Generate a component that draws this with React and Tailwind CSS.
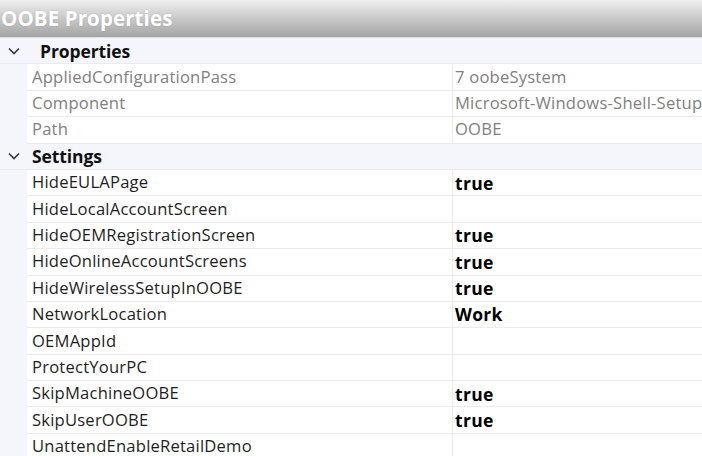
const groups = [
  {
    title: "Properties",
    indent: true,
    rows: [
      { name: "AppliedConfigurationPass", value: "7 oobeSystem", readOnly: true },
      { name: "Component", value: "Microsoft-Windows-Shell-Setup", readOnly: true },
      { name: "Path", value: "OOBE", readOnly: true },
    ],
  },
  {
    title: "Settings",
    rows: [
      { name: "HideEULAPage", value: "true" },
      { name: "HideLocalAccountScreen", value: "" },
      { name: "HideOEMRegistrationScreen", value: "true" },
      { name: "HideOnlineAccountScreens", value: "true" },
      { name: "HideWirelessSetupInOOBE", value: "true" },
      { name: "NetworkLocation", value: "Work" },
      { name: "OEMAppId", value: "" },
      { name: "ProtectYourPC", value: "" },
      { name: "SkipMachineOOBE", value: "true" },
      { name: "SkipUserOOBE", value: "true" },
      { name: "UnattendEnableRetailDemo", value: "" },
    ],
  },
];

function Chevron() {
  return (
    <svg width="14" height="10" viewBox="0 0 14 10" className="shrink-0">
      <path d="M2 2.5 L7 7.5 L12 2.5" fill="none" stroke="#3a3a3a" strokeWidth="1.7" />
    </svg>
  );
}

function GroupHeader({ title, indent }) {
  return (
    <div className="flex h-[26.4px] items-center bg-[#f4f6fc] border-b border-[#e9ebf0]">
      <div className="w-[27px] flex justify-center">
        <Chevron />
      </div>
      <span className={`${indent ? "pl-[13px]" : "pl-[5px]"} text-[17.5px] font-bold text-[#111] tracking-[-0.1px]`}>{title}</span>
    </div>
  );
}

function Row({ name, value, readOnly }) {
  const color = readOnly ? "text-[#808080]" : "text-[#1e1e1e]";
  return (
    <div className="flex h-[26.4px]">
      <div className="w-[27px] bg-[#f4f6fc]" />
      <div className={`w-[426px] flex items-center pl-[5px] bg-white border-b border-[#ececee] border-r border-r-[#ececee] text-[16.6px] tracking-[0.2px] ${color}`}>
        {name}
      </div>
      <div className={`flex-1 flex items-center pl-[2px] bg-white border-b border-[#ececee] whitespace-nowrap overflow-hidden ${readOnly ? "text-[16.6px] tracking-[0.2px] " + color : "text-[17.5px] font-bold tracking-[0.3px] text-black"}`}>
        {value}
      </div>
    </div>
  );
}

export default function App() {
  return (
    <div className="w-[702px] h-[456px] overflow-hidden bg-[#f4f6fc] font-['Open_Sans',Arial,sans-serif]">
      <div className="h-[38px] bg-gradient-to-b from-[#efefef] to-[#a4a4a4] border-b border-[#dfe0e6] flex items-center pl-[1px]">
        <span className="text-white font-bold text-[20.5px] tracking-[0.1px] [text-shadow:0_0_2px_rgba(0,0,0,0.15)]">
          OOBE Properties
        </span>
      </div>
      {groups.map(g => (
        <div key={g.title}>
          <GroupHeader title={g.title} indent={g.indent} />
          {g.rows.map(r => (
            <Row key={r.name} {...r} />
          ))}
        </div>
      ))}
    </div>
  );
}
